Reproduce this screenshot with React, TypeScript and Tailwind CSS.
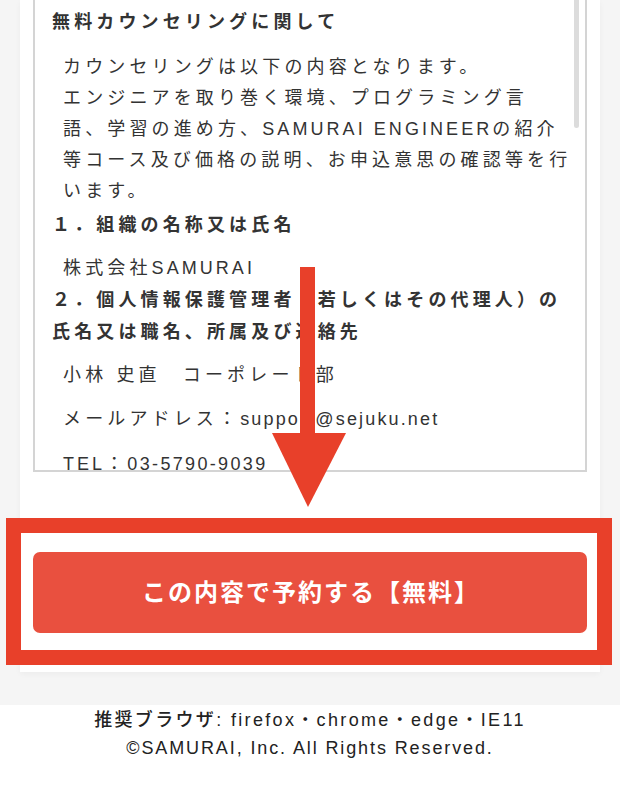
import React from "react";

const font = { fontFamily: '"Liberation Sans", "Noto Sans CJK JP", sans-serif' };

function ScrollBox() {
  return (
    <div className="relative h-[472px] overflow-hidden border-x-2 border-b-2 border-[#d4d4d4] pl-[17px] text-[18px] tracking-[0.23em] text-[#333]">
      {/* scrollbar thumb */}
      <div className="absolute right-[6px] top-0 h-[128px] w-[5px] rounded-b-full bg-[#dcdcdc]" />

      <h3 className="mt-[6px] whitespace-nowrap font-bold leading-[32px]">無料カウンセリングに関して</h3>
      <p className="mt-[14px] whitespace-nowrap pl-[11px] leading-[31px]">
        カウンセリングは以下の内容となります。
        <br />
        エンジニアを取り巻く環境、プログラミング言
        <br />
        語、学習の進め方、<span className="tracking-[0.17em]">SAMURAI ENGINEER</span>の紹介
        <br />
        等コース及び価格の説明、お申込意思の確認等を行
        <br />
        います。
      </p>
      <h3 className="mt-[2px] whitespace-nowrap font-bold leading-[32px]">１．組織の名称又は氏名</h3>
      <p className="mt-[12px] whitespace-nowrap pl-[11px] leading-[31px]">
        株式会社<span className="tracking-[0.17em]">SAMURAI</span>
      </p>
      <h3 className="whitespace-nowrap font-bold leading-[32px]">
        ２．個人情報保護管理者（若しくはその代理人）の
        <br />
        氏名又は職名、所属及び連絡先
      </h3>
      <p className="mt-[12px] whitespace-nowrap pl-[11px] leading-[31px]">小林 史直　コーポレート部</p>
      <p className="mt-[13px] whitespace-nowrap pl-[11px] leading-[31px]">
        メールアドレス：<span className="tracking-[0.12em]">support@sejuku.net</span>
      </p>
      <p className="mt-[14px] whitespace-nowrap pl-[11px] leading-[31px]">
        <span className="tracking-[0.17em]">TEL</span>：<span className="tracking-[0.13em]">03-5790-9039</span>
      </p>
    </div>
  );
}

export default function App() {
  return (
    <div className="relative min-h-screen bg-white" style={font}>
      <div className="bg-[#f5f5f5] px-[20px] pb-[33px]">
        <div className="bg-white px-[13px] pb-[39px] shadow-[0_2px_6px_rgba(0,0,0,0.04)]">
          <ScrollBox />
          <button
            type="button"
            className="mt-[80px] flex h-[81px] w-full items-center justify-center rounded-[7px] bg-[#e9503f] pl-[2px] text-[24px] font-bold tracking-[2px] text-white"
          >
            この内容で予約する【無料】
          </button>
        </div>
      </div>

      <footer className="pt-[1px] text-center text-[18px] leading-[28px] text-[#222]">
        <p className="tracking-[0.13em]">
          <span className="font-medium">推奨ブラウザ</span>: firefox・chrome・edge・IE11
        </p>
        <p className="tracking-[0.105em]">©SAMURAI, Inc. All Rights Reserved.</p>
      </footer>

      {/* annotation arrow */}
      <svg className="pointer-events-none absolute left-[270px] top-[267px]" width="78" height="241" viewBox="0 0 78 241">
        <rect x="30" y="0" width="15" height="168" fill="#e8402a" />
        <polygon points="2,166 76,166 38,240" fill="#e8402a" />
      </svg>

      {/* annotation frame */}
      <div className="pointer-events-none absolute left-[6px] top-[518px] h-[147px] w-[606px] border-[15px] border-[#e8402a]" />
    </div>
  );
}
